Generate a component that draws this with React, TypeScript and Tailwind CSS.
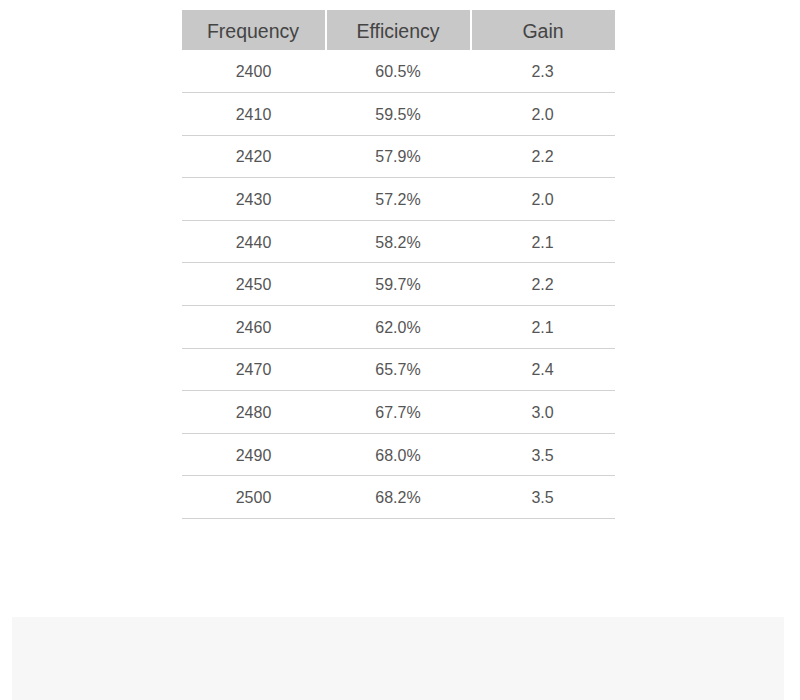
import React from 'react';

interface Row {
  frequency: number;
  efficiency: string;
  gain: string;
}

const rows: Row[] = [
  { frequency: 2400, efficiency: '60.5%', gain: '2.3' },
  { frequency: 2410, efficiency: '59.5%', gain: '2.0' },
  { frequency: 2420, efficiency: '57.9%', gain: '2.2' },
  { frequency: 2430, efficiency: '57.2%', gain: '2.0' },
  { frequency: 2440, efficiency: '58.2%', gain: '2.1' },
  { frequency: 2450, efficiency: '59.7%', gain: '2.2' },
  { frequency: 2460, efficiency: '62.0%', gain: '2.1' },
  { frequency: 2470, efficiency: '65.7%', gain: '2.4' },
  { frequency: 2480, efficiency: '67.7%', gain: '3.0' },
  { frequency: 2490, efficiency: '68.0%', gain: '3.5' },
  { frequency: 2500, efficiency: '68.2%', gain: '3.5' },
];

const App: React.FC = () => {
  return (
    <div
      className="min-h-[700px] bg-white pl-[12px] pr-[16px] pt-[10px]"
      style={{ fontFamily: '"Liberation Sans", Arial, sans-serif' }}
    >
      {/* Antenna table */}
      <table className="mx-auto w-[433px] border-collapse table-fixed">
        <thead>
          <tr className="h-[40px] bg-[#c8c8c8] text-[19.5px] text-[#444]">
            <th className="w-[144px] pt-[3px] font-normal">Frequency</th>
            <th className="w-[145px] border-l-2 border-white pt-[3px] font-normal">Efficiency</th>
            <th className="w-[144px] border-l-2 border-white pt-[3px] font-normal">Gain</th>
          </tr>
        </thead>
        <tbody>
          {rows.map((row) => (
            <tr key={row.frequency} className="h-[42.6px] border-b-[1.5px] border-[#d2d2d2] text-[16px] text-[#555] text-center">
              <td className="pt-[2px]">{row.frequency}</td>
              <td className="pt-[2px]">{row.efficiency}</td>
              <td className="pt-[2px]">{row.gain}</td>
            </tr>
          ))}
        </tbody>
      </table>

      {/* Footer panel */}
      <div className="mt-[98px] h-[100px] bg-[#f7f7f7]" />
    </div>
  );
};

export default App;
